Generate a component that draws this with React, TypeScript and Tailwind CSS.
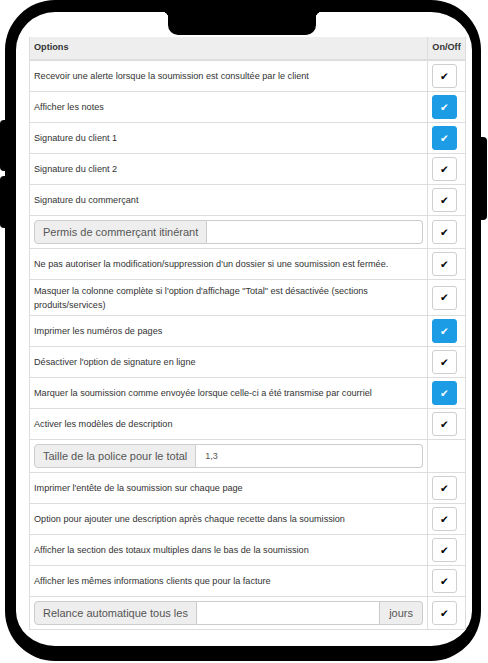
import React from 'react';

type Row =
  | { kind: 'text'; label: string; on: boolean }
  | { kind: 'input'; label: string; value?: string; suffix?: string; on: boolean | null };

const rows: Row[] = [
  { kind: 'text', label: 'Recevoir une alerte lorsque la soumission est consultée par le client', on: false },
  { kind: 'text', label: 'Afficher les notes', on: true },
  { kind: 'text', label: 'Signature du client 1', on: true },
  { kind: 'text', label: 'Signature du client 2', on: false },
  { kind: 'text', label: 'Signature du commerçant', on: false },
  { kind: 'input', label: 'Permis de commerçant itinérant', on: false },
  { kind: 'text', label: "Ne pas autoriser la modification/suppression d'un dossier si une soumission est fermée.", on: false },
  { kind: 'text', label: 'Masquer la colonne complète si l\'option d\'affichage "Total" est désactivée (sections produits/services)', on: false },
  { kind: 'text', label: 'Imprimer les numéros de pages', on: true },
  { kind: 'text', label: "Désactiver l'option de signature en ligne", on: false },
  { kind: 'text', label: 'Marquer la soumission comme envoyée lorsque celle-ci a été transmise par courriel', on: true },
  { kind: 'text', label: 'Activer les modèles de description', on: false },
  { kind: 'input', label: 'Taille de la police pour le total', value: '1,3', on: null },
  { kind: 'text', label: "Imprimer l'entête de la soumission sur chaque page", on: false },
  { kind: 'text', label: 'Option pour ajouter une description après chaque recette dans la soumission', on: false },
  { kind: 'text', label: 'Afficher la section des totaux multiples dans le bas de la soumission', on: false },
  { kind: 'text', label: 'Afficher les mêmes informations clients que pour la facture', on: false },
  { kind: 'input', label: 'Relance automatique tous les', suffix: 'jours', on: false },
];

const Check = ({ on }: { on: boolean }) => (
  <div
    className={
      on
        ? 'w-[25px] h-[24px] rounded-[3px] border border-[#1b9ce5] bg-[#1b9ce5] text-white flex items-center justify-center'
        : 'w-[25px] h-[24px] rounded-[3px] border border-[#cfcfcf] bg-white text-black flex items-center justify-center'
    }
  >
    <span className="text-[10.5px] leading-none font-['DejaVu_Sans',sans-serif]">✔</span>
  </div>
);

export default function App() {
  return (
    <div className="relative w-[488px] h-[663px] bg-white font-['Liberation_Sans',Arial,sans-serif] overflow-hidden">
      {/* side buttons */}
      <div className="absolute left-0 top-[120px] w-[8px] h-[51px] bg-black rounded-l-[4px]" />
      <div className="absolute left-0 top-[176px] w-[8px] h-[52px] bg-black rounded-l-[4px]" />
      <div className="absolute left-[478px] top-[137px] w-[9px] h-[83px] bg-black rounded-r-[4px]" />

      <div className="relative ml-[5px] w-[476px] h-[661px] rounded-[50px] border-t-[12px] border-b-[15px] border-l-[11px] border-r-[9px] border-black bg-white overflow-hidden">
        {/* notch */}
        <div className="absolute top-0 left-[152px] w-[148px] h-[23px] bg-black rounded-b-[10px]" />
        <div className="absolute top-0 left-[146px] w-[6px] h-[6px] bg-[radial-gradient(circle_at_0_100%,transparent_6px,black_6.5px)]" />
        <div className="absolute top-0 left-[300px] w-[6px] h-[6px] bg-[radial-gradient(circle_at_100%_100%,transparent_6px,black_6.5px)]" />

        <div className="pt-[25px] pl-[13px] pr-[6px]">
          <div className="border-x border-[#dddddd] text-[9.15px] text-[#333333]">
            <div className="flex h-[24px] bg-[#eeeeee] border-b-2 border-[#dddddd] font-bold">
              <div className="flex-1 flex items-center px-[4px]">Options</div>
              <div className="w-[38px] border-l border-[#dddddd] flex items-center justify-center">On/Off</div>
            </div>
            {rows.map((r, i) => (
              <div
                key={i}
                className={
                  'flex border-b border-[#dddddd] ' +
                  (r.kind === 'input' ? 'min-h-[33px]' : i === 7 ? 'min-h-[36px]' : 'min-h-[31px]')
                }
              >
                <div className="flex-1 flex items-center px-[4px] leading-[14px]">
                  {r.kind === 'text' ? (
                    <span>{r.label}</span>
                  ) : (
                    <div className="flex w-full h-[24px] text-[11px] text-[#555555]">
                      <div className="flex items-center px-[8px] bg-[#eeeeee] border border-[#cccccc] rounded-l-[4px] whitespace-nowrap">
                        {r.label}
                      </div>
                      <div
                        className={
                          'flex-1 flex items-center px-[9px] bg-white border border-l-0 border-[#cccccc] text-[9px] ' +
                          (r.suffix ? '' : 'rounded-r-[4px]')
                        }
                      >
                        {r.value ?? ''}
                      </div>
                      {r.suffix && (
                        <div className="flex items-center px-[9px] bg-[#eeeeee] border border-l-0 border-[#cccccc] rounded-r-[4px]">
                          {r.suffix}
                        </div>
                      )}
                    </div>
                  )}
                </div>
                <div className="w-[38px] border-l border-[#dddddd] flex items-center pl-[4px]">
                  {r.on !== null && <Check on={r.on} />}
                </div>
              </div>
            ))}
          </div>
        </div>
      </div>
    </div>
  );
}
